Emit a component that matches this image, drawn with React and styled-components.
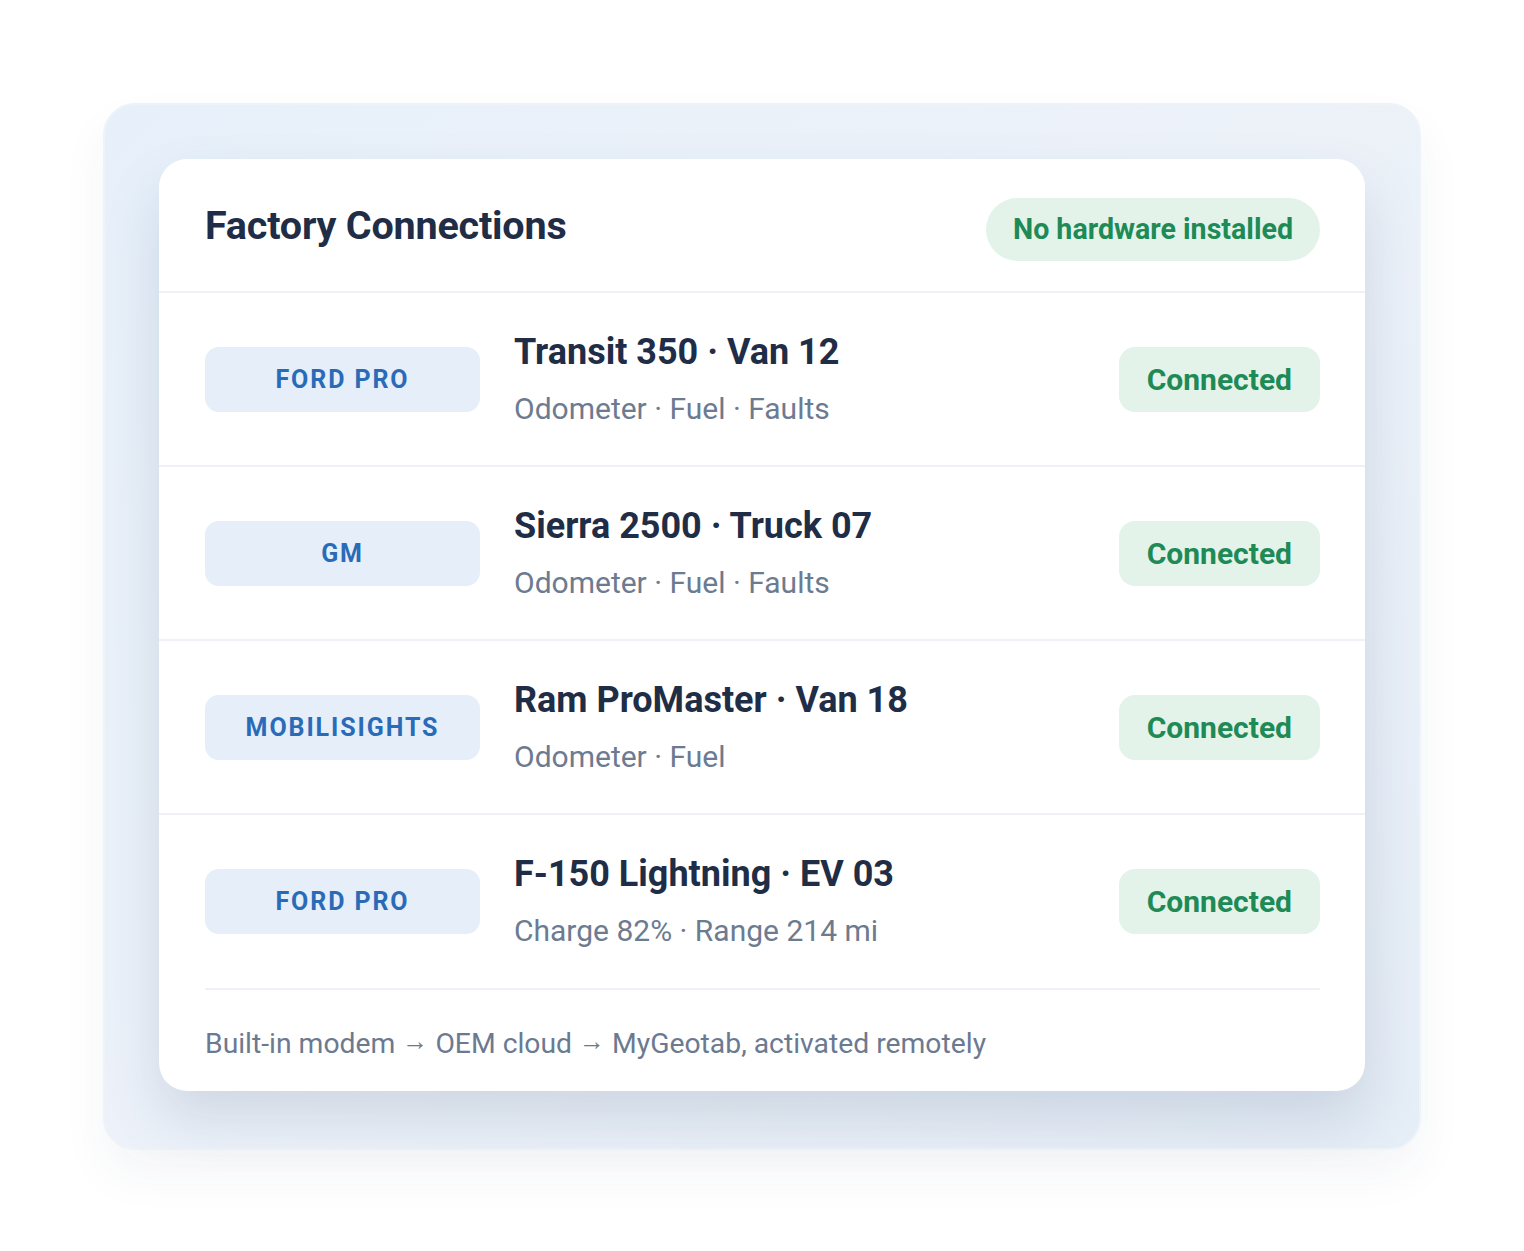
import React from "react";
import styled, { createGlobalStyle } from "styled-components";

const GlobalStyle = createGlobalStyle`
  * {
    box-sizing: border-box;
  }
  body {
    margin: 0;
    background: #ffffff;
    font-family: Roboto, "Liberation Sans", Arial, sans-serif;
  }
`;

const connections = [
  {
    provider: "FORD PRO",
    vehicle: "Transit 350 · Van 12",
    data: "Odometer · Fuel · Faults",
  },
  {
    provider: "GM",
    vehicle: "Sierra 2500 · Truck 07",
    data: "Odometer · Fuel · Faults",
  },
  {
    provider: "MOBILISIGHTS",
    vehicle: "Ram ProMaster · Van 18",
    data: "Odometer · Fuel",
  },
  {
    provider: "FORD PRO",
    vehicle: "F-150 Lightning · EV 03",
    data: "Charge 82% · Range 214 mi",
  },
];

export default function App() {
  return (
    <>
      <GlobalStyle />
      <Page>
        <Frame>
          <Card>
            <Header>
              <Title>Factory Connections</Title>
              <StatusPill>No hardware installed</StatusPill>
            </Header>
            {connections.map((item, i) => (
              <Row key={i} last={i === connections.length - 1}>
                <Provider>{item.provider}</Provider>
                <Details>
                  <Vehicle>{item.vehicle}</Vehicle>
                  <DataList>{item.data}</DataList>
                </Details>
                <Connected>Connected</Connected>
              </Row>
            ))}
            <Footer>
              Built-in modem <Arrow>→</Arrow> OEM cloud <Arrow>→</Arrow>{" "}
              MyGeotab, activated remotely
            </Footer>
          </Card>
        </Frame>
      </Page>
    </>
  );
}

const Page = styled.main`
  padding: 103px 103px 103px;
  min-height: 1251px;
`;

const Frame = styled.section`
  width: 1318px;
  padding: 56px 56px 59px;
  border-radius: 32px;
  border: 2px solid #eef3f9;
  background: linear-gradient(135deg, #e7f0fa 0%, #edf2f9 50%, #e5edf6 100%);
  box-shadow: 0 24px 48px rgba(40, 60, 90, 0.05);
`;

const Card = styled.div`
  width: 1206px;
  margin: -2px;
  background: #ffffff;
  border-radius: 28px;
  box-shadow: 0 28px 56px rgba(40, 70, 110, 0.15);
`;

const Header = styled.header`
  display: flex;
  align-items: center;
  justify-content: space-between;
  height: 134px;
  padding: 0 45px 0 46px;
  border-bottom: 2px solid #eef2f6;
`;

const Title = styled.h1`
  margin: 0;
  font-size: 39.5px;
  font-weight: 700;
  color: #1f2d47;
  letter-spacing: -0.2px;
`;

const StatusPill = styled.span`
  display: inline-flex;
  align-items: center;
  height: 63px;
  margin-top: 8px;
  padding: 0 27px;
  border-radius: 999px;
  background: #e3f3ea;
  color: #1e8a56;
  font-size: 28.6px;
  font-weight: 700;
`;

const Row = styled.div`
  display: flex;
  align-items: center;
  height: ${(props) => (props.last ? "173px" : "174px")};
  padding: 0 45px 0 46px;
  border-bottom: ${(props) => (props.last ? "none" : "2px solid #eef2f6")};
`;

const Provider = styled.span`
  display: flex;
  align-items: center;
  justify-content: center;
  flex: 0 0 275px;
  height: 65px;
  margin-right: 34px;
  border-radius: 14px;
  background: #e5eef9;
  color: #2a6bb8;
  font-size: 25px;
  font-weight: 700;
  letter-spacing: 1.9px;
`;

const Details = styled.div`
  display: flex;
  flex-direction: column;
  gap: 15px;
`;

const Vehicle = styled.span`
  font-size: 36px;
  line-height: 44px;
  font-weight: 700;
  color: #1f2d47;
`;

const DataList = styled.span`
  font-size: 30px;
  line-height: 40px;
  color: #6d7b91;
`;

const Connected = styled.span`
  display: inline-flex;
  align-items: center;
  height: 65px;
  margin-left: auto;
  padding: 0 28px;
  border-radius: 16px;
  background: #e3f3ea;
  color: #1e8a56;
  font-size: 30px;
  font-weight: 700;
`;

const Footer = styled.footer`
  height: 103px;
  padding-top: 4px;
  margin: 0 45px 0 46px;
  border-top: 2px solid #eef1f5;
  font-size: 28.3px;
  line-height: 95px;
  color: #6b7a90;
  white-space: nowrap;
`;

const Arrow = styled.span`
  font-family: "Liberation Sans", Arial, sans-serif;
  font-size: 26px;
  vertical-align: 0.1em;
`;
